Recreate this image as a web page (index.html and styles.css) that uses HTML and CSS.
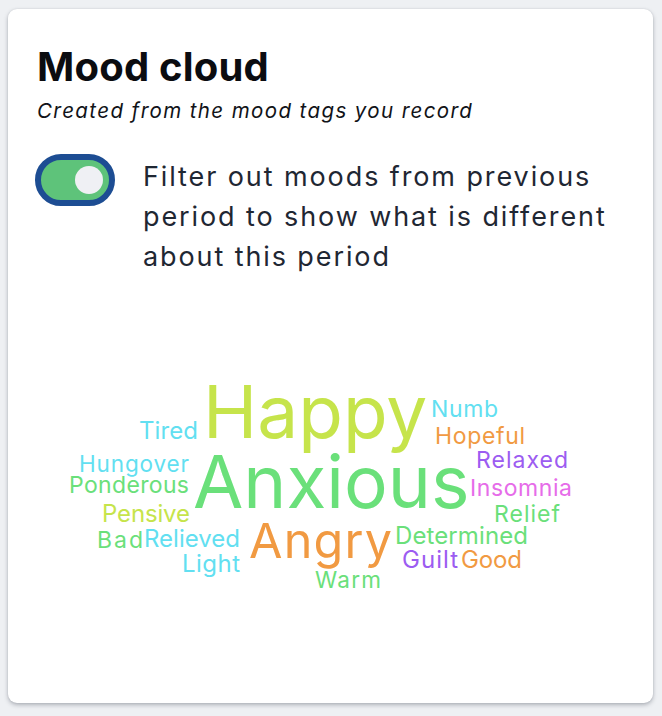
FILE: index.html
```html
<!DOCTYPE html>
<html lang="en">
<head>
<meta charset="utf-8">
<title>Mood cloud</title>
<link rel="stylesheet" href="styles.css">
</head>
<body>
<section class="card">
  <header class="head">
    <h1 class="title">Mood cloud</h1>
    <p class="subtitle">Created from the mood tags you record</p>
  </header>
  <label class="filter">
    <span class="toggle"><span class="knob"></span></span>
    <span class="filter-text">Filter out moods from previous period to show what is different about this period</span>
  </label>
  <div class="cloud">
    <svg class="cloud-svg" width="645" height="260" viewBox="8 360 645 260" xmlns="http://www.w3.org/2000/svg">
      <text class="w lime" x="203" y="438" font-size="73">Happy</text>
      <text class="w cyan" x="431" y="417" font-size="23" textLength="67" lengthAdjust="spacing">Numb</text>
      <text class="w cyan" x="139" y="439" font-size="24" textLength="59" lengthAdjust="spacing">Tired</text>
      <text class="w orange" x="435" y="444" font-size="23" textLength="90" lengthAdjust="spacing">Hopeful</text>
      <text class="w cyan" x="79" y="472" font-size="22.5" textLength="110" lengthAdjust="spacing">Hungover</text>
      <text class="w purple" x="476" y="468" font-size="23" textLength="92" lengthAdjust="spacing">Relaxed</text>
      <text class="w green" x="193" y="508" font-size="73">Anxious</text>
      <text class="w green" x="69" y="493" font-size="23" textLength="120" lengthAdjust="spacing">Ponderous</text>
      <text class="w pink" x="470" y="496" font-size="23" textLength="102" lengthAdjust="spacing">Insomnia</text>
      <text class="w lime" x="102" y="522" font-size="24" textLength="88" lengthAdjust="spacing">Pensive</text>
      <text class="w green" x="494" y="522" font-size="23" textLength="66" lengthAdjust="spacing">Relief</text>
      <text class="w green" x="97" y="548" font-size="23" textLength="46" lengthAdjust="spacing">Bad</text>
      <text class="w cyan" x="144" y="547" font-size="24" textLength="96" lengthAdjust="spacing">Relieved</text>
      <text class="w orange" x="249" y="558" font-size="48.5" textLength="143" lengthAdjust="spacing">Angry</text>
      <text class="w green" x="395" y="544" font-size="24" textLength="133" lengthAdjust="spacing">Determined</text>
      <text class="w cyan" x="182" y="572" font-size="24" textLength="58" lengthAdjust="spacing">Light</text>
      <text class="w purple" x="402" y="568" font-size="24" textLength="56" lengthAdjust="spacing">Guilt</text>
      <text class="w orange" x="461" y="568" font-size="24" textLength="61" lengthAdjust="spacing">Good</text>
      <text class="w green" x="315" y="588" font-size="22.5" textLength="66" lengthAdjust="spacing">Warm</text>
    </svg>
  </div>
</section>
</body>
</html>
```

FILE: styles.css
```css
* { box-sizing: border-box; }

html, body {
  margin: 0;
  padding: 0;
  background: #eef0f3;
}

body {
  width: 662px;
  height: 716px;
  overflow: hidden;
  font-family: Inter, "Noto Sans", sans-serif;
}

.card {
  width: 645px;
  height: 694px;
  margin: 9px 0 0 8px;
  background: #ffffff;
  border-radius: 9px;
  box-shadow: 0 2px 4px rgba(60, 66, 80, 0.35), 0 0 2px rgba(60, 66, 80, 0.12);
  display: flex;
  flex-direction: column;
}

.head {
  padding: 34px 28px 0 29px;
}

.title {
  margin: 0;
  font-size: 40px;
  line-height: 48px;
  font-weight: 700;
  color: #0b0c10;
  letter-spacing: 0.2px;
}

.subtitle {
  margin: 6px 0 0;
  font-size: 20.5px;
  line-height: 28px;
  font-style: italic;
  color: #111318;
  letter-spacing: 1.4px;
}

.filter {
  display: flex;
  align-items: flex-start;
  gap: 28px;
  padding: 0 20px 0 27px;
  margin-top: 20px;
}

.toggle {
  flex: none;
  width: 80px;
  height: 52px;
  margin-top: 9px;
  border: 6px solid #1d4d93;
  border-radius: 26px;
  background: #5ec37a;
  display: flex;
  align-items: center;
  justify-content: flex-end;
  padding-right: 6px;
}

.knob {
  width: 28px;
  height: 28px;
  border-radius: 50%;
  background: #eff0f4;
}

.filter-text {
  margin-top: 12px;
  font-size: 27px;
  line-height: 40px;
  color: #1f2733;
  letter-spacing: 1.9px;
}

.cloud {
  margin-top: auto;
  margin-bottom: 83px;
}

.cloud-svg {
  display: block;
}

.w {
  font-family: Inter, "Noto Sans", sans-serif;
  font-weight: 400;
}

.lime { fill: #c6e44b; }
.green { fill: #6ae07a; }
.cyan { fill: #62dff1; }
.orange { fill: #f19a42; }
.purple { fill: #9c5cf1; }
.pink { fill: #e66ce9; }
```
